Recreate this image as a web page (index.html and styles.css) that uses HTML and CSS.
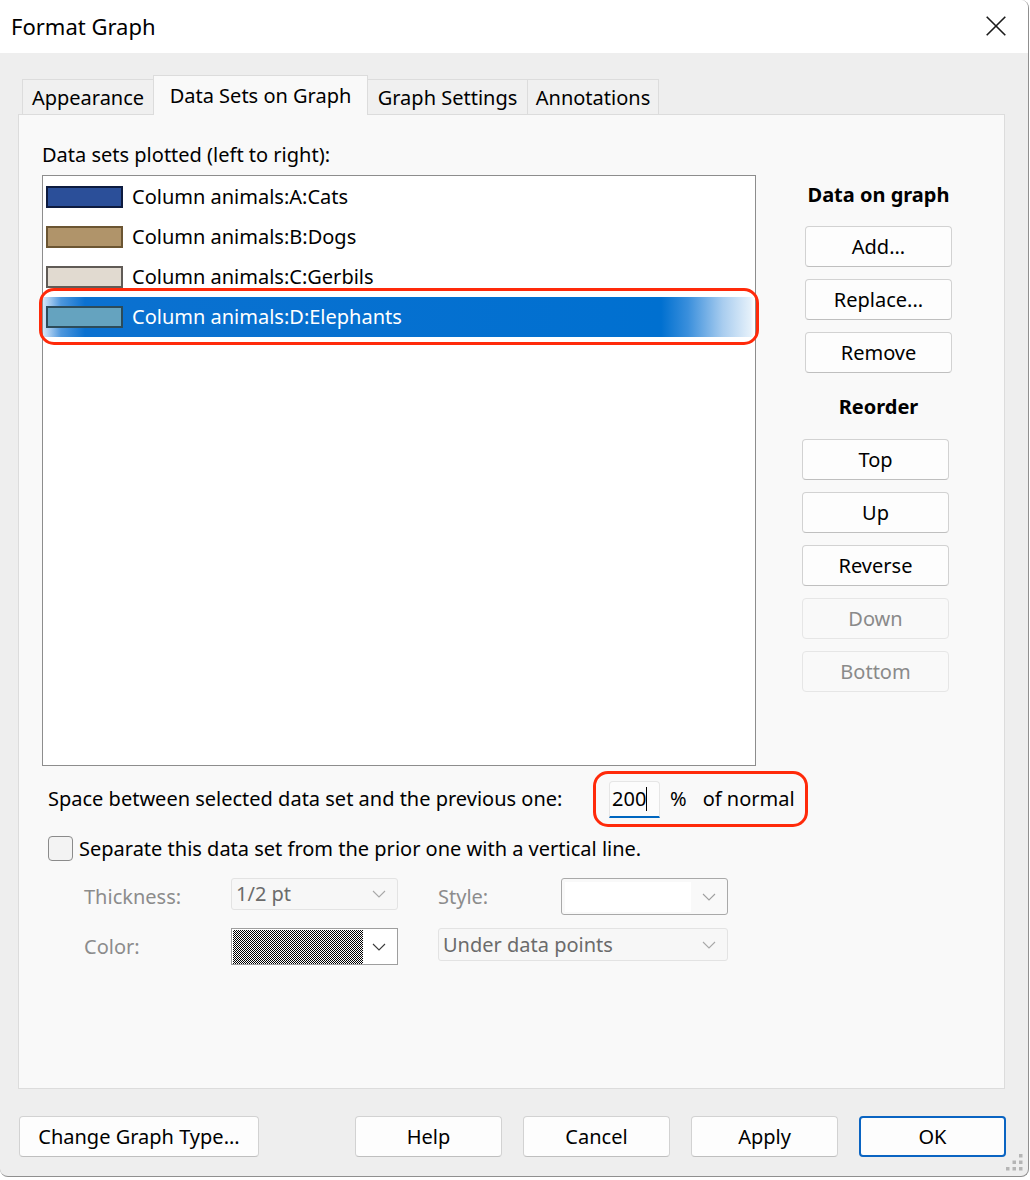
FILE: index.html
```html
<!DOCTYPE html>
<html>
<head>
<meta charset="utf-8">
<title>Format Graph</title>
<link rel="stylesheet" href="styles.css">
</head>
<body>
<div class="window">
  <div class="titlebar">
    <span class="title">Format Graph</span>
    <svg class="close" viewBox="0 0 20 20" width="20" height="20"><path d="M0.7 0.7 L19.3 19.3 M19.3 0.7 L0.7 19.3" stroke="#1b1b1b" stroke-width="1.6" fill="none"/></svg>
  </div>

  <div class="tabs">
    <div class="tab tab-app">Appearance</div>
    <div class="tab active tab-ds">Data Sets on Graph</div>
    <div class="tab tab-gs">Graph Settings</div>
    <div class="tab tab-an">Annotations</div>
  </div>

  <div class="panel">
    <div class="top">
      <div class="left">
        <div class="label">Data sets plotted (left to right):</div>
        <div class="listbox">
          <div class="row"><span class="sw sw-a"></span><span>Column animals:A:Cats</span></div>
          <div class="row"><span class="sw sw-b"></span><span>Column animals:B:Dogs</span></div>
          <div class="row"><span class="sw sw-c"></span><span>Column animals:C:Gerbils</span></div>
          <div class="row selected"><span class="sw sw-d"></span><span>Column animals:D:Elephants</span><span class="mark mark-row"></span></div>
        </div>
      </div>
      <div class="side">
        <div class="gtitle first">Data on graph</div>
        <div class="btn g1 b-add">Add...</div>
        <div class="btn g1">Replace...</div>
        <div class="btn g1">Remove</div>
        <div class="gtitle second">Reorder</div>
        <div class="btn g2 b-top">Top</div>
        <div class="btn g2">Up</div>
        <div class="btn g2">Reverse</div>
        <div class="btn g2 disabled">Down</div>
        <div class="btn g2 disabled">Bottom</div>
      </div>
    </div>

    <div class="space-row">
      <span class="space-label">Space between selected data set and the previous one:</span>
      <span class="mark-box">
        <span class="num-input"><span class="caret">200</span></span>
        <span class="pct">%</span>
        <span class="of">of normal</span>
      </span>
    </div>

    <div class="check-row">
      <span class="checkbox"></span>
      <span>Separate this data set from the prior one with a vertical line.</span>
    </div>

    <div class="opts">
      <span class="olabel">Thickness:</span>
      <span class="sel sel-thick"><span class="seltext">1/2 pt</span><svg class="chev" viewBox="0 0 14 8" width="14" height="8"><path d="M1 1 L7 7 L13 1" stroke="#a8a8a8" stroke-width="1.1" fill="none"/></svg></span>
      <span class="gap"></span>
      <span class="olabel">Style:</span>
      <span class="sel sel-style"><span class="style-white"></span><svg class="chev" viewBox="0 0 14 8" width="14" height="8"><path d="M1 1 L7 7 L13 1" stroke="#a0a0a0" stroke-width="1.1" fill="none"/></svg></span>

      <span class="olabel">Color:</span>
      <span class="sel sel-color"><span class="checker"></span><svg class="chev" viewBox="0 0 14 8" width="14" height="8"><path d="M1 1 L7 7 L13 1" stroke="#3a3a3a" stroke-width="1.1" fill="none"/></svg></span>
      <span class="gap"></span>
      <span class="sel sel-under"><span class="seltext">Under data points</span><svg class="chev" viewBox="0 0 14 8" width="14" height="8"><path d="M1 1 L7 7 L13 1" stroke="#a8a8a8" stroke-width="1.1" fill="none"/></svg></span>
    </div>
  </div>

  <div class="footer">
    <div class="btn fbtn wide">Change Graph Type...</div>
    <div class="btn fbtn">Help</div>
    <div class="btn fbtn">Cancel</div>
    <div class="btn fbtn">Apply</div>
    <div class="btn fbtn ok">OK</div>
  </div>

  <svg class="grip" viewBox="0 0 18 18" width="18" height="18">
    <rect x="13" y="0" width="3.5" height="3.5" fill="#b5b5b5"/>
    <rect x="6.5" y="6.5" width="3.5" height="3.5" fill="#b5b5b5"/>
    <rect x="13" y="6.5" width="3.5" height="3.5" fill="#b5b5b5"/>
    <rect x="0" y="13" width="3.5" height="3.5" fill="#b5b5b5"/>
    <rect x="6.5" y="13" width="3.5" height="3.5" fill="#b5b5b5"/>
    <rect x="13" y="13" width="3.5" height="3.5" fill="#b5b5b5"/>
  </svg>
</div>
</body>
</html>
```

FILE: styles.css
```css
* { box-sizing: border-box; }

html, body {
  margin: 0;
  padding: 0;
  background: #ffffff;
}

body {
  font-family: "Noto Sans", "Segoe UI", "DejaVu Sans", sans-serif;
  font-size: 20px;
  color: #000;
  line-height: 24px;
}

.window {
  position: relative;
  width: 1029px;
  height: 1177px;
  background: #eeeeee;
  border-right: 1px solid #8f8f8f;
  border-bottom: 1px solid #8f8f8f;
  border-radius: 0 8px 8px 8px;
  overflow: hidden;
}

/* title bar */
.titlebar {
  height: 53px;
  background: #ffffff;
  display: flex;
  align-items: center;
  justify-content: space-between;
  padding: 0 22px 0 11px;
}
.title {
  font-size: 22px;
  line-height: 28px;
  margin-top: -2px;
}
.close { display: block; margin-top: -2px; }

/* tabs */
.tabs {
  display: flex;
  align-items: flex-end;
  height: 39px;
  margin: 22px 0 0 22px;
}
.tab {
  height: 35px;
  border: 1px solid #dcdcdc;
  border-bottom: none;
  background: #f0f0f0;
  display: flex;
  align-items: center;
  justify-content: center;
  margin-right: -1px;
  padding-top: 2px;
}
.tab-app { width: 132px; }
.tab-ds { width: 215px; }
.tab-gs { width: 161px; }
.tab-an { width: 132px; }
.tab.active {
  height: 40px;
  margin-bottom: -1px;
  background: #f9f9f9;
  position: relative;
  z-index: 1;
  padding-top: 0;
}

/* panel */
.panel {
  margin-left: 18px;
  width: 987px;
  height: 975px;
  background: #f9f9f9;
  border: 1px solid #dcdcdc;
  padding: 28px 0 0 23px;
}
.top { display: flex; }
.left { width: 714px; flex: none; }
.label { height: 24px; }
.listbox {
  margin-top: 8px;
  width: 714px;
  height: 591px;
  background: #ffffff;
  border: 1px solid #8d8d8d;
  padding-top: 1px;
}
.row {
  position: relative;
  height: 40px;
  display: flex;
  align-items: center;
  padding-left: 3px;
}
.sw {
  width: 77px;
  height: 22px;
  border: 2px solid #000;
  margin-right: 9px;
  flex: none;
}
.sw-a { background: #2b4f99; border-color: #0d1b3f; }
.sw-b { background: #b0946a; border-color: #6b5532; }
.sw-c { background: #e1dad0; border-color: #605b56; }
.sw-d { background: #65a3bf; border-color: #2c4b59; }
.row.selected {
  color: #ffffff;
  background: linear-gradient(to right, #d6e7f8 0px, #4d97dd 18px, #0b71d0 42px, #0070d0 618px, #3a8fdc 645px, #a9cdef 680px, #e4f0fa 707px, #ffffff 711px);
}
.mark {
  position: absolute;
  border: 3px solid #ff2a0a;
  border-radius: 15px;
  pointer-events: none;
}
.mark-row { left: -4px; right: -4px; top: -9px; bottom: -8px; }

/* side column */
.side {
  padding-left: 49px;
  display: flex;
  flex-direction: column;
  align-items: flex-start;
}
.gtitle {
  width: 147px;
  text-align: center;
  font-weight: 700;
  height: 24px;
}
.gtitle.first { margin-top: 40px; margin-bottom: 19px; }
.gtitle.second { margin-top: 22px; margin-bottom: 20px; }

.btn {
  width: 147px;
  height: 41px;
  border: 1px solid #d2d2d2;
  border-bottom-color: #bfbfbf;
  border-radius: 4px;
  background: #fdfdfd;
  display: flex;
  align-items: center;
  justify-content: center;
  flex: none;
}
.g1 + .g1 { margin-top: 12px; }
.g2 { margin-left: -3px; }
.g2 + .g2 { margin-top: 12px; }
.btn.disabled {
  background: #f9f9f9;
  border-color: #e6e6e6;
  color: #8a8a8a;
}

/* space row */
.space-row {
  margin-top: 5px;
  margin-left: 6px;
  display: flex;
  align-items: center;
}
.space-label { width: 545px; flex: none; }
.mark-box {
  width: 215px;
  height: 56px;
  border: 3px solid #ff2a0a;
  border-radius: 15px;
  display: flex;
  align-items: center;
  padding-left: 13px;
}
.num-input {
  width: 51px;
  height: 37px;
  background: #fcfcfc;
  border: 1px solid #e6e6e6;
  border-bottom: 2px solid #0067c0;
  border-radius: 4px 4px 0 0;
  padding-left: 2px;
  display: flex;
  align-items: center;
}
.caret { border-right: 1px solid #000; line-height: 24px; }
.pct { margin-left: 10px; }
.of { margin-left: 16px; }

/* checkbox row */
.check-row {
  margin-top: 9px;
  margin-left: 6px;
  display: flex;
  align-items: center;
  gap: 6px;
}
.checkbox {
  width: 25px;
  height: 25px;
  border: 1px solid #8b8b8b;
  border-radius: 4px;
  background: #f3f3f3;
  flex: none;
}

/* option grid */
.opts {
  margin-top: 17px;
  margin-left: 42px;
  display: grid;
  grid-template-columns: 147px 167px 40px 123px 167px;
  grid-template-rows: 37px 37px;
  row-gap: 13px;
}
.olabel {
  color: #8c8c8c;
  align-self: center;
}
.sel {
  position: relative;
  display: flex;
  align-items: center;
  border-radius: 3px;
}
.chev { position: absolute; right: 11px; top: 50%; margin-top: -4px; }
.seltext { padding-left: 4px; color: #6b6b6b; }
.sel-thick {
  height: 32px;
  align-self: start;
  border: 1px solid #e3e3e3;
  background: #f7f7f7;
}
.sel-style {
  height: 37px;
  border: 1px solid #a9a9a9;
  background: #f9f9f9;
  padding: 3px;
}
.style-white {
  width: 126px;
  height: 30px;
  background: #ffffff;
}
.sel-color {
  height: 37px;
  border: 1px solid #9e9e9e;
  background: #ffffff;
  padding: 1px;
  border-radius: 0;
}
.checker {
  width: 130px;
  height: 34px;
  background: repeating-conic-gradient(#000 0 25%, #fff 0 50%) 0 0 / 2px 2px;
}
.sel-under {
  grid-column: 4 / 6;
  height: 33px;
  align-self: start;
  border: 1px solid #e3e3e3;
  background: #f7f7f7;
}

/* footer */
.footer {
  margin-top: 27px;
  padding-left: 19px;
  display: flex;
  gap: 21px;
}
.fbtn.wide { width: 240px; margin-right: 75px; }
.fbtn.ok {
  border: 2px solid #0a64c2;
}

.grip {
  position: absolute;
  right: 4px;
  bottom: 4px;
}
```
